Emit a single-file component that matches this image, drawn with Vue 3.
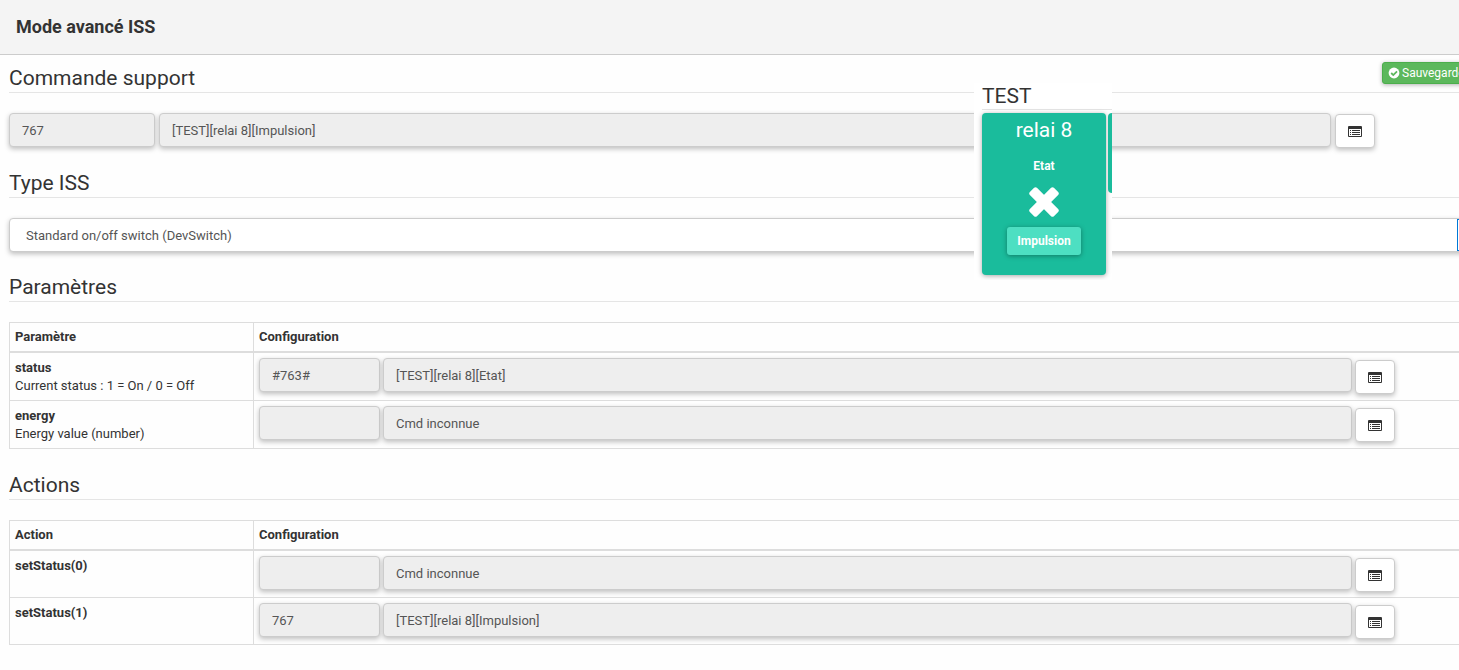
<script setup>
import { ref } from 'vue'

const type = ref('Standard on/off switch (DevSwitch)')
const tables = [
  {
    title: 'Paramètres',
    head: 'Paramètre',
    rows: [
      { name: 'status', note: 'Current status : 1 = On / 0 = Off', id: '#763#', label: '[TEST][relai 8][Etat]' },
      { name: 'energy', note: 'Energy value (number)', id: '', label: 'Cmd inconnue' }
    ]
  },
  {
    title: 'Actions',
    head: 'Action',
    rows: [
      { name: 'setStatus(0)', id: '', label: 'Cmd inconnue' },
      { name: 'setStatus(1)', id: '767', label: '[TEST][relai 8][Impulsion]' }
    ]
  }
]
</script>

<template>
  <div class="page">
    <header class="titlebar"><h1>Mode avancé ISS</h1></header>

    <main class="content">
      <section>
        <div class="legend first">
          <h2>Commande support</h2>
          <button type="button" class="save">
            <svg viewBox="0 0 12 12" width="12" height="12" aria-hidden="true">
              <circle cx="6" cy="6" r="5.4" fill="#fff" />
              <path d="M3.2 6 L5.3 8.1 L9 4.4" fill="none" stroke="#5cb85c" stroke-width="1.8" />
            </svg>
            Sauvegarder
          </button>
        </div>
        <div class="fields support">
          <input class="box id" value="767" disabled aria-label="Identifiant de la commande" />
          <input class="box label" value="[TEST][relai 8][Impulsion]" disabled aria-label="Commande support" />
          <button type="button" class="pick" aria-label="Choisir une commande">
            <svg viewBox="0 0 14 12" width="14" height="12" aria-hidden="true">
              <path fill="#333" fill-rule="evenodd" d="M1 1H13Q14 1 14 2V11Q14 12 13 12H1Q0 12 0 11V2Q0 1 1 1ZM1 4V11H13V4Z" />
              <path fill="#333" d="M2 5h1v1H2zM2 7h1v1H2zM2 9h1v1H2zM4 5h8v1H4zM4 7h8v1H4zM4 9h8v1H4z" />
            </svg>
          </button>
        </div>
      </section>

      <section>
        <div class="legend"><h2 id="type-title">Type ISS</h2></div>
        <div class="selectwrap">
          <select v-model="type" class="box type" aria-labelledby="type-title">
            <option>Standard on/off switch (DevSwitch)</option>
          </select>
        </div>
      </section>

      <section v-for="t in tables" :key="t.title">
        <div class="legend"><h2>{{ t.title }}</h2></div>
        <table>
          <thead>
            <tr><th class="namecol">{{ t.head }}</th><th>Configuration</th></tr>
          </thead>
          <tbody>
            <tr v-for="r in t.rows" :key="r.name">
              <td>
                <strong>{{ r.name }}</strong>
                <div v-if="r.note" class="note">{{ r.note }}</div>
              </td>
              <td>
                <div class="fields">
                  <input class="box id" :value="r.id" disabled :aria-label="r.name + ' identifiant'" />
                  <input class="box label" :value="r.label" disabled :aria-label="r.name + ' commande'" />
                  <button type="button" class="pick" aria-label="Choisir une commande">
                    <svg viewBox="0 0 14 12" width="14" height="12" aria-hidden="true">
                      <path fill="#333" fill-rule="evenodd" d="M1 1H13Q14 1 14 2V11Q14 12 13 12H1Q0 12 0 11V2Q0 1 1 1ZM1 4V11H13V4Z" />
                      <path fill="#333" d="M2 5h1v1H2zM2 7h1v1H2zM2 9h1v1H2zM4 5h8v1H4zM4 7h8v1H4zM4 9h8v1H4z" />
                    </svg>
                  </button>
                </div>
              </td>
            </tr>
          </tbody>
        </table>
      </section>
    </main>

    <aside class="overlay">
      <h2>TEST</h2>
      <div class="tiles">
        <div class="tile">
          <h3>relai 8</h3>
          <strong>Etat</strong>
          <svg viewBox="0 0 30 30" width="30" height="30" aria-hidden="true">
            <g fill="#fff" transform="rotate(45 15 15)">
              <rect x="-2" y="10" width="34" height="10" rx="2" />
              <rect x="10" y="-2" width="10" height="34" rx="2" />
            </g>
          </svg>
          <button type="button">Impulsion</button>
        </div>
        <div class="sliver"></div>
      </div>
    </aside>
  </div>
</template>

<style>
body {
  background: #fefefe;
}
</style>

<style scoped>
.page {
  position: relative;
  overflow: hidden;
  min-height: 100vh;
  font-family: Roboto, "Liberation Sans", sans-serif;
  font-size: 13px;
  line-height: 19px;
  color: #333;
}
.page *,
.page *::before,
.page *::after {
  box-sizing: border-box;
}
h1, h2, h3 {
  margin: 0;
  font-weight: 400;
}
button, input, select {
  font: inherit;
}
.titlebar {
  height: 55px;
  padding: 0 16px;
  background: #f4f4f4;
  border-bottom: 1px solid #ccc;
}
.titlebar h1 {
  font-size: 18px;
  font-weight: 700;
  line-height: 54px;
}
.content {
  padding-left: 9px;
}
.legend {
  display: flex;
  align-items: flex-start;
  height: 31px;
  margin: 19px 0 20px;
  border-bottom: 1px solid #e5e5e5;
}
.legend.first {
  margin-top: 7px;
}
.legend h2 {
  flex: 1;
  font-size: 21px;
  line-height: 32px;
}
.save {
  display: flex;
  align-items: center;
  gap: 2px;
  width: 93px;
  height: 22px;
  margin-right: -16px;
  padding: 0 5px;
  border: 1px solid #4cae4c;
  border-radius: 3px;
  background: #5cb85c;
  color: #fff;
  font-size: 12px;
  box-shadow: 0 1px 4px rgba(0, 0, 0, 0.3);
}
.save svg {
  flex: none;
}
.fields {
  display: flex;
  gap: 3px;
  height: 36px;
  margin-right: 74px;
}
.fields.support {
  gap: 4px;
  height: 35px;
  margin-right: 84px;
}
.box {
  height: 34px;
  padding: 0 12px;
  border: 1px solid #ccc;
  border-radius: 4px;
  color: #555;
  box-shadow: 0 2px 5px rgba(0, 0, 0, 0.25);
}
input.box {
  min-width: 0;
  background: #eee;
}
.id {
  flex: 0 0 121px;
}
.support .id {
  flex-basis: 146px;
}
.label {
  flex: 1;
}
.pick {
  display: flex;
  align-items: center;
  justify-content: center;
  width: 40px;
  height: 34px;
  margin-top: 2px;
  padding: 0;
  border: 1px solid #ccc;
  border-radius: 4px;
  background: #fff;
  box-shadow: 0 2px 5px rgba(0, 0, 0, 0.25);
}
.support .pick {
  margin-top: 1px;
}
.selectwrap {
  position: relative;
}
.selectwrap::after {
  content: "";
  position: absolute;
  top: 1px;
  right: 0;
  width: 2px;
  height: 32px;
  border: 1px solid #0078d7;
  border-right: 0;
}
.type {
  display: block;
  width: calc(100% + 16px);
  padding: 0 16px;
  appearance: none;
  background: #fff;
}
table {
  width: calc(100% + 16px);
  margin-bottom: 20px;
  border-collapse: collapse;
  table-layout: fixed;
}
th, td {
  padding: 5px;
  border: 1px solid #ddd;
  text-align: left;
  vertical-align: top;
}
th {
  border-bottom-width: 2px;
  line-height: 18px;
}
.namecol {
  width: 244px;
}
td strong {
  display: block;
}
.note {
  line-height: 18px;
}
.overlay {
  position: absolute;
  top: 83px;
  left: 974px;
  width: 138px;
  padding: 0 0 5px 8px;
  background: #fff;
  overflow: hidden;
}
.overlay h2 {
  height: 27px;
  margin-bottom: 3px;
  border-bottom: 1px solid #e5e5e5;
  font-size: 21px;
  line-height: 26px;
}
.tiles {
  display: flex;
  align-items: flex-start;
  gap: 2px;
}
.tile {
  display: flex;
  flex: none;
  flex-direction: column;
  align-items: center;
  width: 124px;
  height: 162px;
  border-radius: 4px;
  background: #1abc9c;
  color: #fff;
  box-shadow: 0 1px 5px rgba(0, 0, 0, 0.35);
}
.tile h3 {
  font-size: 21px;
  line-height: 34px;
}
.tile strong {
  margin-top: 9px;
  font-size: 12px;
  line-height: 20px;
}
.tile svg {
  margin-top: 11px;
}
.tile button {
  width: 74px;
  height: 28px;
  margin-top: 10px;
  padding: 0;
  border: 0;
  border-radius: 3px;
  background: #4ddfc2;
  color: #fff;
  font-size: 12px;
  font-weight: 700;
  box-shadow: 0 1px 5px rgba(0, 0, 0, 0.35);
}
.sliver {
  flex: none;
  width: 20px;
  height: 80px;
  border-radius: 4px;
  background: #1abc9c;
}
</style>
